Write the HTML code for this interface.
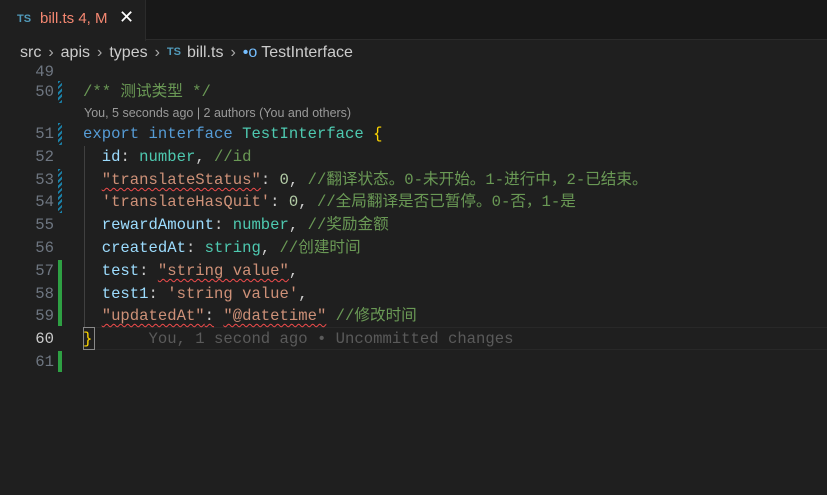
<!DOCTYPE html>
<html><head><meta charset="utf-8"><style>
*{margin:0;padding:0;box-sizing:border-box}
body{width:827px;height:495px;background:#1f1f1f;overflow:hidden;position:relative;font-family:"Liberation Sans","Noto Sans CJK SC",sans-serif}
.tabbar{position:absolute;left:0;top:0;width:827px;height:40px;background:#181818;border-bottom:1px solid #2b2b2b}
.tab{position:absolute;left:0;top:0;width:146px;height:41px;background:#1f1f1f;border-right:1px solid #2b2b2b}
.ts{font-family:"Liberation Sans",sans-serif;font-weight:bold;color:#519aba;font-size:11px;position:absolute}
.crumb{position:absolute;top:43px;left:20px;font-size:16px;line-height:20px;color:#cccccc;white-space:nowrap}
.crumb .sep{color:#aaa;margin:0 7px}
.code{font-family:"Liberation Mono","Noto Sans CJK SC",monospace;font-size:15.6px;line-height:22px;height:22px;white-space:pre;position:absolute;left:83px;color:#9cdcfe}
.ln{font-family:"Liberation Mono",monospace;font-size:15.6px;line-height:22px;position:absolute;width:54px;text-align:right;left:0;color:#6e7681}
.bar{position:absolute;left:58px;width:4px}
.blue{background:repeating-linear-gradient(135deg,#1b81a8 0 2px,transparent 2px 4px)}
.green{background:#2ea043}
.c{color:#6a9955}.k{color:#569cd6}.t{color:#4ec9b0}.s{color:#ce9178}.n{color:#b5cea8}.p{color:#cccccc}.y{color:#ffd700}
.sq{text-decoration:underline wavy #f14c4c;text-underline-offset:3px;text-decoration-thickness:1px}
</style></head><body>
<div class="tabbar"></div>
<div class="tab">
<span class="ts" style="left:17px;top:13px">TS</span>
<span style="position:absolute;left:40px;top:10px;font-size:15px;color:#f48771">bill.ts 4, M</span>
<span style="position:absolute;left:119px;top:7px;font-size:18px;color:#fff">✕</span>
</div>
<div class="crumb">src<span class="sep">›</span>apis<span class="sep">›</span>types<span class="sep">›</span><span class="ts" style="position:relative;top:-2px;margin-right:6px">TS</span>bill.ts<span class="sep">›</span><span style="color:#75beff;margin-right:4px">•o</span>TestInterface</div>

<div class="ln" style="top:61px">49</div>
<div class="ln" style="top:81px">50</div>
<div class="ln" style="top:123px">51</div>
<div class="ln" style="top:146px">52</div>
<div class="ln" style="top:169px">53</div>
<div class="ln" style="top:191px">54</div>
<div class="ln" style="top:214px">55</div>
<div class="ln" style="top:237px">56</div>
<div class="ln" style="top:260px">57</div>
<div class="ln" style="top:283px">58</div>
<div class="ln" style="top:305px">59</div>
<div class="ln" style="top:328px;color:#cccccc">60</div>
<div class="ln" style="top:351px">61</div>

<div class="bar blue" style="top:81px;height:22px"></div>
<div class="bar blue" style="top:123px;height:22px"></div>
<div class="bar blue" style="top:169px;height:44px"></div>
<div class="bar green" style="top:260px;height:66px"></div>
<div class="bar green" style="top:351px;height:21px"></div>

<div style="position:absolute;left:84px;top:146px;width:1px;height:182px;background:#404040"></div>
<div style="position:absolute;left:83px;top:327px;width:744px;height:23px;border-top:1px solid #282828;border-bottom:1px solid #282828"></div>
<div style="position:absolute;left:83px;top:327px;width:12px;height:23px;border:1px solid #888"></div>

<div class="code c" style="top:81px">/** 测试类型 */</div>
<div style="position:absolute;left:84px;top:106px;font-size:12.5px;color:#999">You, 5 seconds ago | 2 authors (You and others)</div>
<div class="code" style="top:123px"><span class="k">export interface</span> <span class="t">TestInterface</span> <span class="y">{</span></div>
<div class="code" style="top:146px">  id<span class="p">:</span> <span class="t">number</span><span class="p">,</span> <span class="c">//id</span></div>
<div class="code" style="top:169px">  <span class="s sq">"translateStatus"</span><span class="p">:</span> <span class="n">0</span><span class="p">,</span> <span class="c">//翻译状态。0-未开始。1-进行中，2-已结束。</span></div>
<div class="code" style="top:191px">  <span class="s">'translateHasQuit'</span><span class="p">:</span> <span class="n">0</span><span class="p">,</span> <span class="c">//全局翻译是否已暂停。0-否，1-是</span></div>
<div class="code" style="top:214px">  rewardAmount<span class="p">:</span> <span class="t">number</span><span class="p">,</span> <span class="c">//奖励金额</span></div>
<div class="code" style="top:237px">  createdAt<span class="p">:</span> <span class="t">string</span><span class="p">,</span> <span class="c">//创建时间</span></div>
<div class="code" style="top:260px">  test<span class="p">:</span> <span class="s sq">"string value"</span><span class="p">,</span></div>
<div class="code" style="top:283px">  test1<span class="p">:</span> <span class="s">'string value'</span><span class="p">,</span></div>
<div class="code" style="top:305px">  <span class="s sq">"updatedAt"</span><span class="p sq">:</span> <span class="s sq">"@datetime"</span> <span class="c">//修改时间</span></div>
<div class="code" style="top:328px"><span class="y">}</span>      <span style="color:#5a5a5a">You, 1 second ago • Uncommitted changes</span></div>
</body></html>
